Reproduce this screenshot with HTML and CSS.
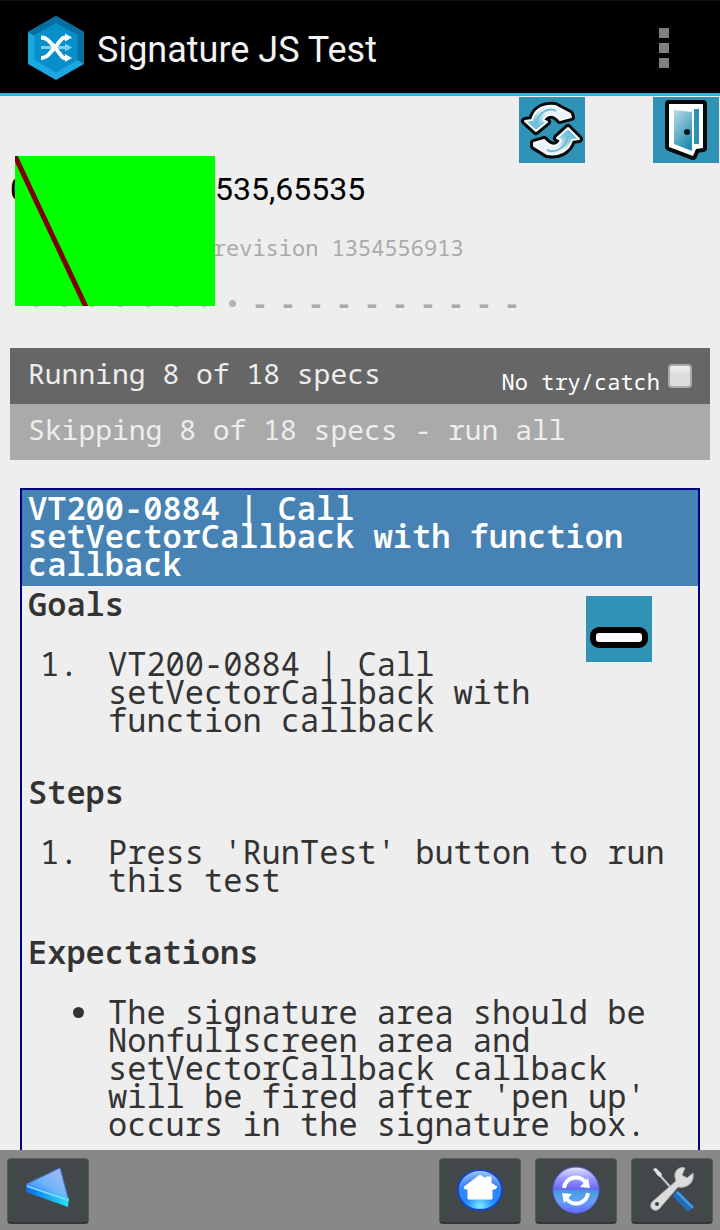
FILE: index.html
```html
<!DOCTYPE html>
<html lang="en">
<head>
<meta charset="utf-8">
<meta name="viewport" content="width=device-width, initial-scale=1">
<title>Signature JS Test</title>
<link rel="stylesheet" href="styles.css">
</head>
<body>
<header class="app-bar">
  <svg class="app-logo" viewBox="0 0 56 64" aria-hidden="true">
    <path fill="#1ba8e0" d="M28 0 56 16V48L28 64 0 48V16Z"/>
    <path fill="#056f9f" d="M0 16 28 0 56 16V48L49 44 28 8 7 20Z"/>
    <path fill="#078fcb" d="M28 7 49.500 19V44L28 56.500 6.500 44V19Z"/>
    <path fill="none" stroke="#7fd0f0" stroke-width="3" d="M13 31.500H39"/>
    <path fill="#7fd0f0" d="M37 27.500 44 31.500 37 35.500Z"/>
    <g fill="none" stroke="#fff" stroke-width="4"><path d="M13 21.500C19 21.500 21 25 28 33S33 42 39 42"/><path d="M13 42C19 42 21 38 28 30S33 21.500 39 21.500"/></g>
    <path fill="#fff" d="M37 17.500 44 21.500 37 25.500ZM37 38 44 42 37 46Z"/>
  </svg>
  <h1 class="app-title">Signature JS Test</h1>
  <button class="menu-button" aria-label="More options"><span></span><span></span><span></span></button>
</header>

<main class="page">
  <div class="toolbar">
    <button class="tile" aria-label="Reload">
      <svg viewBox="0 0 66 66" aria-hidden="true">
        <defs><linearGradient id="arrowA" x1="0" y1="1" x2="1" y2="0"><stop offset="0" stop-color="#55b2d2"/><stop offset=".3" stop-color="#7cc4dd"/><stop offset=".6" stop-color="#e6f3f9"/><stop offset="1" stop-color="#f4f4f8"/></linearGradient>
        <linearGradient id="arrowB" x1="1" y1="0" x2="0" y2="1"><stop offset="0" stop-color="#55b2d2"/><stop offset=".3" stop-color="#7cc4dd"/><stop offset=".6" stop-color="#e6f3f9"/><stop offset="1" stop-color="#f4f4f8"/></linearGradient></defs>
        <g stroke="#030808" stroke-width="8" stroke-linejoin="round">
          <path d="M6 24 13 23C16 12 25 8 36 9L51 17 52 20 41 23C34 15 28 17 24 23L28 25 17 34Z"/>
          <path d="M60 42 53 43C50 54 40 59 28 57L15 49 15 46 25 43C32 51 39 50 42 43L38 41 49 31Z"/>
        </g>
        <g stroke="#f6fafc" stroke-width="2" stroke-linejoin="round">
          <path fill="url(#arrowA)" d="M6 24 13 23C16 12 25 8 36 9L51 17 52 20 41 23C34 15 28 17 24 23L28 25 17 34Z"/>
          <path fill="url(#arrowB)" d="M60 42 53 43C50 54 40 59 28 57L15 49 15 46 25 43C32 51 39 50 42 43L38 41 49 31Z"/>
        </g>
        <path fill="none" stroke="#6fbad4" stroke-width="2" d="M17 27C19 15 30 10 37 14M49 39C47 51 36 57 28 53"/>
      </svg>
    </button>
    <button class="tile" aria-label="Exit">
      <svg viewBox="0 0 66 66" aria-hidden="true">
        <defs><linearGradient id="door" x1="0" y1="0" x2=".5" y2="1"><stop offset="0" stop-color="#b8dde6"/><stop offset="1" stop-color="#258fb3"/></linearGradient></defs>
        <path stroke="#030808" stroke-width="8" stroke-linejoin="round" fill="#fff" d="M16 7H50V51L43 52 40 59 16 50Z"/>
        <path fill="#fff" d="M16 7H50V51L43 52 40 59 16 50Z"/>
        <path fill="url(#door)" d="M21 13 39 15V54L21 47Z"/>
        <path fill="#2f91b4" d="M41 12H46V47H41Z"/>
        <circle cx="34" cy="35" r="3" fill="#06131a"/>
      </svg>
    </button>
  </div>

  <p class="vector">0,12,70,150,65535,65535</p>
  <svg class="signature" viewBox="0 0 200 150" role="img" aria-label="Signature area">
    <rect width="200" height="150" fill="#0f0"/>
    <path d="M0 0 71 151" stroke="#800000" stroke-width="5"/>
  </svg>

  <p class="version">Jasmine 1.3.1 revision 1354556913</p>
  <ul class="symbols">
    <li class="passed"></li><li class="passed"></li><li class="passed"></li><li class="passed"></li><li class="passed"></li><li class="passed"></li><li class="passed"></li><li class="passed"></li><li>-</li><li>-</li><li>-</li><li>-</li><li>-</li><li>-</li><li>-</li><li>-</li><li>-</li><li>-</li>
  </ul>

  <section class="alert">
    <div class="bar running">
      <a href="#running">Running 8 of 18 specs</a>
      <span class="option"><label for="notry">No try/catch</label><input type="checkbox" id="notry"></span>
    </div>
    <div class="bar skipping"><a href="#all">Skipping 8 of 18 specs - run all</a></div>
  </section>

  <article class="spec">
    <h2 class="spec-title">VT200-0884 | Call setVectorCallback with function callback</h2>
    <div class="spec-body">
      <button class="tile collapse" aria-label="Collapse">
        <svg viewBox="0 0 66 66" aria-hidden="true"><rect x="7" y="34" width="52" height="15" rx="6" fill="#fbfcff" stroke="#000" stroke-width="6"/></svg>
      </button>
      <h3>Goals</h3>
      <ol><li>VT200-0884 | Call setVectorCallback with function callback</li></ol>
      <h3>Steps</h3>
      <ol><li>Press 'RunTest' button to run this test</li></ol>
      <h3>Expectations</h3>
      <ul><li>The signature area should be Nonfullscreen area and setVectorCallback callback will be fired after 'pen up' occurs in the signature box.</li></ul>
    </div>
  </article>
</main>

<footer class="nav-bar">
  <button class="nav-button back" aria-label="Back">
    <svg viewBox="0 0 80 64" aria-hidden="true">
      <defs><linearGradient id="tri" x1="0" y1="1" x2="1" y2="0"><stop offset="0" stop-color="#167fff"/><stop offset=".5" stop-color="#73b5fa"/><stop offset="1" stop-color="#aebcf8"/></linearGradient>
      <linearGradient id="edge" x1="0" y1="0" x2="1" y2="0"><stop offset="0" stop-color="#0a6bf0"/><stop offset="1" stop-color="#25e2f6"/></linearGradient></defs>
      <path fill="url(#tri)" d="M18 25 52 9 60 40Z"/>
      <path fill="url(#edge)" d="M18 25 61 39 60 48 18 33Z"/>
      <path fill="none" stroke="#7fd2ff" stroke-width="2" d="M19 27 60 41"/>
      <path fill="none" stroke="#4a7fe0" d="M18 26 52 9 60 39"/>
    </svg>
  </button>
  <button class="nav-button" aria-label="Home">
    <svg viewBox="0 0 80 64" aria-hidden="true">
      <defs><radialGradient id="orb" cx=".5" cy=".9" r=".9"><stop offset="0" stop-color="#7eeaff"/><stop offset=".35" stop-color="#208bfb"/><stop offset=".7" stop-color="#3685fa"/><stop offset="1" stop-color="#b5cbff"/></radialGradient></defs>
      <ellipse cx="40" cy="31" rx="22" ry="20" fill="url(#orb)" stroke="#1546c8" stroke-width="2"/>
      <path fill="#fff" stroke="#fff" stroke-linejoin="round" d="M24 28 40 16 46 20V18H51V24L57 28 55 30H52V40H28V30H25Z"/>
    </svg>
  </button>
  <button class="nav-button" aria-label="Refresh">
    <svg viewBox="0 0 80 64" aria-hidden="true">
      <defs><linearGradient id="ball" x1="0" y1="0" x2="0" y2="1"><stop offset="0" stop-color="#e6e3ff"/><stop offset=".25" stop-color="#9c98ff"/><stop offset=".48" stop-color="#6668f5"/><stop offset=".52" stop-color="#469add"/><stop offset=".75" stop-color="#62a3f6"/><stop offset="1" stop-color="#6367ff"/></linearGradient></defs>
      <circle cx="40" cy="31" r="23" fill="url(#ball)" stroke="#5b63e0"/>
      <g fill="none" stroke="#fff" stroke-width="4"><path d="M28 29A12 12 0 0 1 50 24"/><path d="M52 34A12 12 0 0 1 30 39"/></g>
      <path fill="#fff" d="M52 19 54 29 44 28ZM28 44 26 34 36 35Z"/>
    </svg>
  </button>
  <button class="nav-button" aria-label="Settings">
    <svg viewBox="0 0 80 64" aria-hidden="true">
      <path d="M24 12 41 31" stroke="#c9c9c9" stroke-width="2"/>
      <path fill="#e4e4e4" d="M21 10 24 9 30 15 29 18 26 17Z"/>
      <path d="M43 34 59 50" stroke="#1f70b8" stroke-width="8"/>
      <path d="M45 33 61 49" stroke="#4ba2e4" stroke-width="2"/>
      <path fill="#dcdcdc" stroke="#aaa" stroke-width="1" d="M53 9C47 7 42 12 43 18L44 22 20 43C16 48 22 54 27 50L46 28C54 30 63 24 61 14L55 19 50 16Z"/>
      <circle cx="25" cy="45" r="2" fill="#3d4144"/>
    </svg>
  </button>
</footer>
</body>
</html>
```
FILE: styles.css
```css
* { box-sizing: border-box; }

body {
  margin: 0;
  height: 100vh;
  display: flex;
  flex-direction: column;
  background: #eee;
  color: #333;
  font-family: "Droid Sans Mono", "Noto Sans Mono", "DejaVu Sans Mono", monospace;
}

button { border: 0; padding: 0; background: none; cursor: pointer; }
h1, h2, h3, p, ul, ol { margin: 0; padding: 0; }
ul, ol { list-style: none; }
svg { display: block; }

.app-bar {
  flex: none;
  display: flex;
  align-items: center;
  height: 96px;
  padding: 2px 28px 0;
  background: #000;
  border-top: 1px solid #111;
  border-bottom: 3px solid #33b5e5;
}
.app-logo { width: 56px; height: 64px; }
.app-title {
  flex: 1;
  margin-left: 13px;
  padding-top: 4px;
  color: #f3f3f3;
  font: 400 36px/42px Roboto, sans-serif;
}
.menu-button {
  display: flex;
  flex-direction: column;
  align-items: center;
  gap: 5px;
  width: 56px;
}
.menu-button span { width: 10px; height: 10px; background: #808080; }

.page {
  flex: 1;
  min-height: 0;
  overflow: hidden;
  position: relative;
}
.toolbar {
  display: flex;
  justify-content: flex-end;
  gap: 68px;
  padding: 1px 1px 0 0;
}
.tile { width: 66px; height: 66px; background: #3093b5; }

.vector {
  margin: 7px 10px 0;
  color: #000;
  font: 32px/38px Roboto, sans-serif;
}
.signature {
  position: absolute;
  top: 60px;
  left: 15px;
  width: 200px;
  height: 150px;
}
.version {
  margin: 25px 28px 0;
  color: #aaa;
  font-size: 22px;
  line-height: 28px;
}
.symbols {
  display: flex;
  margin: 28px 22px 31px;
  color: #aaa;
  font-size: 28px;
  font-weight: 700;
  line-height: 28px;
}
.symbols li { width: 28px; text-align: center; }
.symbols .passed {
  display: flex;
  align-items: center;
  justify-content: center;
}
.symbols .passed::before {
  content: "";
  width: 7px;
  height: 7px;
  border-radius: 50%;
  background: #b3b3b3;
}

.alert { margin: 0 10px; }
.bar {
  display: flex;
  justify-content: space-between;
  min-height: 56px;
  padding: 11px 18px 0;
  font-size: 28px;
  line-height: 28px;
}
.bar a { color: #eee; text-decoration: none; }
.running { background: #666; }
.skipping { background: #aaa; }
.option {
  display: flex;
  align-items: flex-start;
  gap: 8px;
  padding-top: 5px;
  color: #fff;
  font-size: 22px;
}
.option label { padding-top: 3px; }
.option input {
  appearance: none;
  width: 24px;
  height: 24px;
  margin: 0;
  border: 2px solid #aaa;
  border-radius: 4px;
  background: linear-gradient(#f2f2f2, #ddd 40%);
}

.spec {
  margin: 28px 20px 0;
  border: 2px solid #000080;
  font-size: 32px;
  line-height: 28px;
}
.spec-title {
  padding: 4px 6px 8px;
  background: #4682b4;
  color: #fff;
  font-size: 32px;
  font-weight: 600;
}
.spec-body { position: relative; padding: 4px 6px; }
.spec-body h3 { font-size: 32px; font-weight: 600; }
.spec-body ol, .spec-body ul { margin: 32px 0 44px; }
.spec-body li { display: grid; grid-template-columns: 80px 1fr; }
.spec-body ol li::before { content: "1."; padding-left: 12px; }
.spec-body ul li::before {
  content: "";
  width: 11px;
  height: 11px;
  margin: 9px 0 0 45px;
  border-radius: 50%;
  background: #333;
}
.collapse { position: absolute; top: 10px; right: 46px; }

.nav-bar {
  flex: none;
  display: flex;
  gap: 14px;
  padding: 8px 7px 6px;
  background: #888;
}
.nav-button {
  width: 82px;
  height: 66px;
  border: 1px solid #5a5d5f;
  border-bottom: 2px solid #34383a;
  border-radius: 4px;
  background: #42474a;
}
.nav-button.back { margin-right: auto; }
```
